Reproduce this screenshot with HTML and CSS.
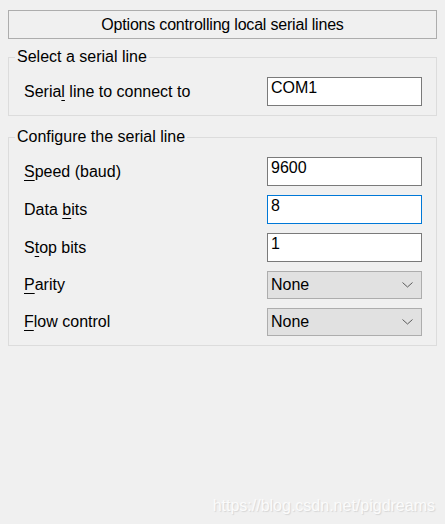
FILE: index.html
```html
<!DOCTYPE html>
<html>
<head>
<meta charset="utf-8">
<link rel="stylesheet" href="styles.css">
</head>
<body>
<div class="page">
  <div class="title">Options controlling local serial lines</div>

  <fieldset class="group">
    <legend>Select a serial line</legend>
    <div class="rows">
      <div class="row">
        <span class="label">Seria<u>l</u> line to connect to</span>
        <div class="field">COM1</div>
      </div>
    </div>
  </fieldset>

  <fieldset class="group group2">
    <legend>Configure the serial line</legend>
    <div class="rows">
      <div class="row">
        <span class="label"><u>S</u>peed (baud)</span>
        <div class="field">9600</div>
      </div>
      <div class="row">
        <span class="label">Data <u>b</u>its</span>
        <div class="field focused">8</div>
      </div>
      <div class="row">
        <span class="label">S<u>t</u>op bits</span>
        <div class="field">1</div>
      </div>
      <div class="row">
        <span class="label"><u>P</u>arity</span>
        <div class="select"><span>None</span><svg class="chev" width="11" height="6" viewBox="0 0 11 6"><path d="M0.5 0.5 L5.5 5 L10.5 0.5" fill="none" stroke="#5a5a5a" stroke-width="1"/></svg></div>
      </div>
      <div class="row">
        <span class="label"><u>F</u>low control</span>
        <div class="select"><span>None</span><svg class="chev" width="11" height="6" viewBox="0 0 11 6"><path d="M0.5 0.5 L5.5 5 L10.5 0.5" fill="none" stroke="#5a5a5a" stroke-width="1"/></svg></div>
      </div>
    </div>
  </fieldset>
</div>
<div class="watermark">https://blog.csdn.net/pigdreams</div>
</body>
</html>
```

FILE: styles.css
```css
html, body {
  margin: 0;
  padding: 0;
  background: #f0f0f0;
}
body {
  width: 445px;
  height: 524px;
  position: relative;
  overflow: hidden;
  font-family: "Liberation Sans", Arial, sans-serif;
  font-size: 16px;
  color: #000;
}
.page {
  padding: 10px 8px 0 8px;
}
.title {
  height: 27px;
  line-height: 27px;
  border: 1px solid #adadad;
  text-align: center;
  background: #f0f0f0;
  letter-spacing: -0.2px;
}
.group {
  margin: 9px 0 0 0;
  padding: 0;
  border: 1px solid #dcdcdc;
  min-width: 0;
}
.group2 {
  margin-top: 12px;
}
.group legend {
  padding: 0 2px;
  margin-left: 6px;
  line-height: 18px;
  height: 18px;
}
.rows {
  padding: 11px 14px 9px 15px;
  display: flex;
  flex-direction: column;
  gap: 9px;
}
.row {
  display: flex;
  align-items: center;
  justify-content: space-between;
}
.label {
  line-height: 18px;
}
.label u {
  text-decoration: underline;
  text-underline-offset: 3px;
  text-decoration-thickness: 1px;
}
.field {
  box-sizing: border-box;
  width: 155px;
  height: 29px;
  border: 1px solid #7a7a7a;
  background: #fff;
  padding: 1px 3px 0 3px;
  line-height: 18px;
}
.field.focused {
  border-color: #0078d7;
}
.select {
  box-sizing: border-box;
  width: 155px;
  height: 28px;
  border: 1px solid #adadad;
  background: #e1e1e1;
  padding: 0 8px 0 3px;
  display: flex;
  align-items: center;
  justify-content: space-between;
}
.chev {
  display: block;
}
.watermark {
  position: absolute;
  right: 10px;
  bottom: 9px;
  font-size: 16px;
  line-height: 18px;
  color: #fbfbfb;
  text-shadow: 1px 1px 1px #d6d6d6;
}
```
